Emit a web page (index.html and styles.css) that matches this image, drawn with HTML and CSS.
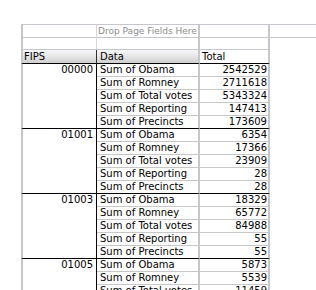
FILE: index.html
```html
<!DOCTYPE html>
<html>
<head>
<meta charset="utf-8">
<link rel="stylesheet" href="styles.css">
</head>
<body>
<div class="sheet">
  <div class="row r-page">
    <div class="c fips"></div>
    <div class="c data"><span class="drop">Drop Page Fields Here</span></div>
    <div class="c total"></div>
    <div class="c extra"></div>
  </div>
  <div class="row r-blank">
    <div class="c fips"></div>
    <div class="c data"></div>
    <div class="c total"></div>
    <div class="c extra"></div>
  </div>
  <div class="row r-head">
    <div class="c fips btn">FIPS</div>
    <div class="c data btn">Data</div>
    <div class="c total">Total</div>
    <div class="c extra"></div>
  </div>

  <div class="row"><div class="c fips">00000</div><div class="c data">Sum of Obama</div><div class="c total">2542529</div><div class="c extra"></div></div>
  <div class="row"><div class="c fips"></div><div class="c data">Sum of Romney</div><div class="c total">2711618</div><div class="c extra"></div></div>
  <div class="row"><div class="c fips"></div><div class="c data">Sum of Total votes</div><div class="c total">5343324</div><div class="c extra"></div></div>
  <div class="row"><div class="c fips"></div><div class="c data">Sum of Reporting</div><div class="c total">147413</div><div class="c extra"></div></div>
  <div class="row last"><div class="c fips"></div><div class="c data">Sum of Precincts</div><div class="c total">173609</div><div class="c extra"></div></div>

  <div class="row"><div class="c fips">01001</div><div class="c data">Sum of Obama</div><div class="c total">6354</div><div class="c extra"></div></div>
  <div class="row"><div class="c fips"></div><div class="c data">Sum of Romney</div><div class="c total">17366</div><div class="c extra"></div></div>
  <div class="row"><div class="c fips"></div><div class="c data">Sum of Total votes</div><div class="c total">23909</div><div class="c extra"></div></div>
  <div class="row"><div class="c fips"></div><div class="c data">Sum of Reporting</div><div class="c total">28</div><div class="c extra"></div></div>
  <div class="row last"><div class="c fips"></div><div class="c data">Sum of Precincts</div><div class="c total">28</div><div class="c extra"></div></div>

  <div class="row"><div class="c fips">01003</div><div class="c data">Sum of Obama</div><div class="c total">18329</div><div class="c extra"></div></div>
  <div class="row"><div class="c fips"></div><div class="c data">Sum of Romney</div><div class="c total">65772</div><div class="c extra"></div></div>
  <div class="row"><div class="c fips"></div><div class="c data">Sum of Total votes</div><div class="c total">84988</div><div class="c extra"></div></div>
  <div class="row"><div class="c fips"></div><div class="c data">Sum of Reporting</div><div class="c total">55</div><div class="c extra"></div></div>
  <div class="row last"><div class="c fips"></div><div class="c data">Sum of Precincts</div><div class="c total">55</div><div class="c extra"></div></div>

  <div class="row"><div class="c fips">01005</div><div class="c data">Sum of Obama</div><div class="c total">5873</div><div class="c extra"></div></div>
  <div class="row"><div class="c fips"></div><div class="c data">Sum of Romney</div><div class="c total">5539</div><div class="c extra"></div></div>
  <div class="row"><div class="c fips"></div><div class="c data">Sum of Total votes</div><div class="c total">11459</div><div class="c extra"></div></div>
</div>
</body>
</html>
```

FILE: styles.css
```css
html, body {
  margin: 0;
  padding: 0;
  background: #ffffff;
  overflow: hidden;
  height: 290px;
}

.sheet {
  margin-top: 24px;
  margin-left: 21px;
  font-family: "DejaVu Sans", Verdana, sans-serif;
  font-size: 10px;
  color: #000000;
  border-top: 1px solid #c6c6ce;
}

.row {
  display: grid;
  grid-template-columns: 76px 103px 70px 1fr;
  height: 13px;
}

.c {
  box-sizing: border-box;
  line-height: 12px;
  white-space: nowrap;
  overflow: visible;
}

/* column frames */
.fips {
  border-left: 2px solid #c6c6ce;
  border-right: 1px solid #000000;
  text-align: right;
  padding-right: 3px;
}
.data {
  border-right: 2px solid #c6c6ce;
  padding-left: 3px;
  border-bottom: 1px solid #c8c8c8;
}
.total {
  border-right: 2px solid #c6c6ce;
  text-align: right;
  padding-right: 1px;
  border-bottom: 1px solid #c8c8c8;
}

/* group separators */
.row.last .fips,
.row.last .data,
.row.last .total {
  border-bottom: 1px solid #000000;
}

/* top page-field rows */
.r-page {
  height: 12px;
}
.r-page .c,
.r-blank .c {
  border-bottom: 1px solid #c6c6ce;
}
.r-page .fips,
.r-blank .fips {
  border-right: 1px solid #d6d6dc;
}
.r-blank .extra {
  border-bottom: none;
}
.r-page .data {
  text-align: center;
  padding-left: 0;
  line-height: 11px;
}
.drop {
  font-size: 9px;
  color: #8c8c8c;
}

/* header row */
.r-head {
  height: 14px;
}
.r-head .c {
  line-height: 13px;
  border-bottom: 1px solid #000000;
}
.r-head .fips {
  text-align: left;
  padding-left: 1px;
  padding-right: 0;
  border-right: 1px solid #303030;
}
.r-head .btn {
  background: linear-gradient(#f6f6f6, #e8e8e8 45%, #cfcfcf);
}
.r-head .data {
  border-right: 2px solid #c6c6ce;
}
.r-head .total {
  text-align: left;
  padding-left: 2px;
}
.r-head .extra {
  border-bottom: none;
}
```
